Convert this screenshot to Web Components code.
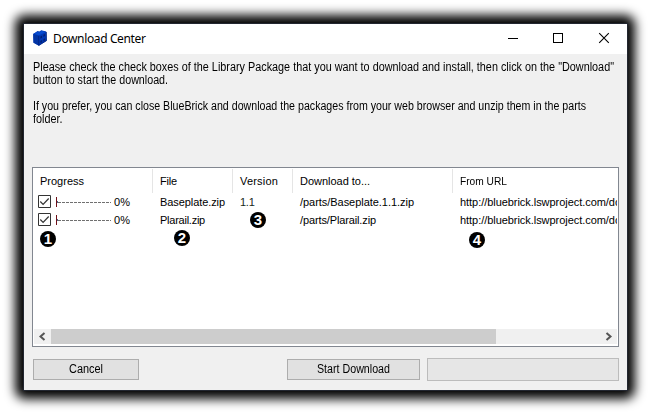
<!DOCTYPE html>
<html lang="en"><head><meta charset="utf-8"><title>Download Center</title>
<style>
html,body{margin:0;width:651px;height:414px;overflow:hidden;background:#fff}
body{font:11px/13px "Liberation Sans",Arial,sans-serif;color:#000}
</style></head><body>
<download-window></download-window>
<script>
const define=(name,html,setup)=>customElements.define(name,class extends HTMLElement{
  connectedCallback(){
    if(this.shadowRoot)return;
    const t=document.createElement('template');t.innerHTML=html;
    this.attachShadow({mode:'open'}).append(t.content.cloneNode(true));
    if(setup)setup(this,this.shadowRoot);
  }
});
// A single line of text set to the width given in "w": tracked, or condensed when "narrow" is present.
define('fit-text',`<style>:host{display:block;white-space:pre;line-height:inherit}span{display:inline-block;transform-origin:0 50%}</style><span><slot></slot></span>`,(el,r)=>{
  const s=r.querySelector('span'),w=+el.getAttribute('w');
  if(!w)return;
  const n=s.getBoundingClientRect().width;
  if(el.hasAttribute('narrow')){s.style.transform='scaleX('+(w/n).toFixed(5)+')';el.style.width=w+'px'}
  else s.style.letterSpacing=((w-n)/el.textContent.length).toFixed(4)+'px';
});
define('brick-icon',`<style>:host{display:block;width:14px;height:16px;margin-top:-2px;flex:none}svg{display:block}</style>
<svg width="14" height="16" viewBox="0 0 14 16"><path d="M.2 3.8 3 2.2 4.5 1l2 .4L8.2.3l5 1.2.5 9.3L5.8 15.8.4 12.8Z" fill="#0238b4"/><path d="M.3 4 5.8 5.8v9.8L.6 12.6Z" fill="#0335a4"/><path d="m.8 3.8 3-2 2.4.5L8.6.8l4.2 1.1-7 3.6Z" fill="#074bd0"/><path d="M5.8 5.8v9.6l7.6-4.7V2" fill="none" stroke="#01227a" stroke-width=".8"/><path d="m7.4 6.5 1.7-.9v2.2l-1.7.9Zm3-1.7 1.6-.9v2.2l-1.6.9Zm-3 6.1 1.7-.9v2.2l-1.7.9Zm3-1.7 1.6-.9v2.2l-1.6.9Z" fill="#012174"/></svg>`);
define('title-bar',`<style>:host{display:flex;height:30px;background:#fff;box-sizing:border-box;padding-left:9px;align-items:center}
.t{font:12px/16px "Noto Sans","Open Sans",sans-serif;margin-left:6px;flex:1}svg{display:block;width:46px;height:30px}svg:last-child{width:45px}</style>
<brick-icon></brick-icon><div class="t"><fit-text w="92.5">Download Center</fit-text></div>
<svg viewBox="0 0 46 30" shape-rendering="crispEdges"><path d="M18 14.5h10" stroke="#000"/></svg>
<svg viewBox="0 0 46 30" shape-rendering="crispEdges"><path d="M17.5 9.5h9v9h-9z" fill="none" stroke="#000"/></svg>
<svg viewBox="0 0 45 30"><path d="m17.2 9.2 9.6 9.6m0-9.6-9.6 9.6" stroke="#000" stroke-width="1.1"/></svg>`);
define('intro-text',`<style>:host{display:block;padding:7px 0 0 9px;height:113px;box-sizing:border-box;font-size:12px;line-height:13px}i{display:block;height:13px}</style>
<fit-text narrow w="581">Please check the check boxes of the Library Package that you want to download and install, then click on the "Download"</fit-text>
<fit-text narrow w="135">button to start the download.</fit-text><i></i>
<fit-text narrow w="553">If you prefer, you can close BlueBrick and download the packages from your web browser and unzip them in the parts</fit-text>
<fit-text narrow w="29.5">folder.</fit-text>`);
define('list-header',`<style>:host{display:grid;grid-template-columns:120px 80px 60px 160px 1fr;height:24px;padding-top:1px}
div{padding:6px 0 0 7px;border-right:1px solid #e5e5e5}div:last-child{border:0}</style>
<div><fit-text w="44">Progress</fit-text></div><div><fit-text w="17">File</fit-text></div><div><fit-text w="38">Version</fit-text></div><div><fit-text w="70">Download to...</fit-text></div><div><fit-text narrow w="47">From URL</fit-text></div>`);
define('check-box',`<style>:host{display:block;width:13px;height:13px;flex:none}svg{display:block}</style><svg width="13" height="13"><path d="M.5.5h12v12H.5z" fill="#fff" stroke="#333"/><path d="m2.3 6.5 2.8 2.8 5.6-5.8" fill="none" stroke="#333" stroke-width="1.2"/></svg>`);
define('progress-line',`<style>:host{display:block;width:56px;height:10px;margin-left:5px;flex:none}svg{display:block}</style><svg width="56" height="10" shape-rendering="crispEdges"><path d="M.5 0v10" stroke="#701018"/><path d="M1.5 4v2" stroke="#568"/><path d="M2 5.5h53" stroke="#707070" stroke-dasharray="3 1"/></svg>`);
define('download-row',`<style>:host{display:grid;grid-template-columns:120px 80px 60px 160px 1fr;height:18px;align-items:center;width:584px;overflow:hidden}
.p{display:flex;align-items:center;padding-left:5px}check-box{margin-top:-1px}.p fit-text{margin-left:2px}.c{padding-left:7px}</style>
<div class="p"><check-box></check-box><progress-line></progress-line><fit-text w="16">0%</fit-text></div>
<div class="c"><slot name="file"></slot></div><div class="c"><slot name="version"></slot></div><div class="c"><slot name="path"></slot></div><div class="c"><slot name="url"></slot></div>`);
define('number-badge',`<style>:host{position:absolute;width:16px;height:16px;border-radius:50%;background:#000;color:#fff;font:bold 15px/16px "Liberation Sans",Arial,sans-serif;text-align:center}</style><slot></slot>`);
define('scroll-bar',`<style>:host{display:flex;height:15px;width:583px;margin-left:1px;background:#f0f0f0;align-items:center;justify-content:space-between}
.b{width:445px;height:15px;background:#cdcdcd;margin-right:104px}svg{display:block;width:17px;height:15px}</style>
<svg><path d="m10.5 4-4 3.5 4 3.5" fill="none" stroke="#555" stroke-width="2"/></svg><div class="b"></div><svg><path d="m6.5 4 4 3.5-4 3.5" fill="none" stroke="#555" stroke-width="2"/></svg>`);
define('package-list',`<style>:host{display:flex;flex-direction:column;position:relative;margin:0 8px;height:180px;box-sizing:border-box;border:1px solid #828790;background:#fff;overflow:hidden}
list-header{flex:none}.g{flex:1}scroll-bar{margin-bottom:2px}</style>
<list-header></list-header>
<download-row><fit-text slot="file" w="65">Baseplate.zip</fit-text><fit-text slot="version" w="14.5" style="color:#182818">1.1</fit-text><fit-text slot="path" w="114">/parts/Baseplate.1.1.zip</fit-text><fit-text slot="url" w="161">http://bluebrick.lswproject.com/do</fit-text></download-row>
<download-row><fit-text slot="file" w="45">Plarail.zip</fit-text><fit-text slot="path" w="76">/parts/Plarail.zip</fit-text><fit-text slot="url" w="161">http://bluebrick.lswproject.com/do</fit-text></download-row>
<div class="g"></div><scroll-bar></scroll-bar>
<number-badge style="left:7px;top:63px">1</number-badge><number-badge style="left:141px;top:62px">2</number-badge><number-badge style="left:217px;top:44px">3</number-badge><number-badge style="left:436px;top:64px">4</number-badge>`);
define('push-button',`<style>:host{display:flex;height:21px;box-sizing:border-box;border:1px solid #adadad;background:#e1e1e1;align-items:center;justify-content:center;font-size:12px;line-height:15px}</style><slot></slot>`);
define('progress-box',`<style>:host{display:block;width:192px;height:23px;box-sizing:border-box;border:1px solid #bcbcbc;background:#e6e6e6}</style>`);
define('download-window',`<style>:host{display:block;padding:24px;box-sizing:border-box;width:651px;height:414px;background:#fff}
.w{position:relative;width:603px;height:366px;z-index:0}
.w::before{content:"";position:absolute;z-index:-2;inset:-9px -8px -9px -9px;background:#000;border-radius:9px;filter:blur(5.5px)}
.in{position:absolute;inset:0;background:#f0f0f0;box-shadow:0 0 0 1px #222630}
.f{display:flex;align-items:center;padding:11px 8px 0 9px;height:23px}
.f push-button:first-child{width:106px;margin-right:148px}.f push-button:nth-child(2){width:133px;margin-right:7px}</style>
<div class="w"><div class="in"><title-bar></title-bar><intro-text></intro-text><package-list></package-list>
<div class="f"><push-button><fit-text narrow w="34">Cancel</fit-text></push-button><push-button><fit-text narrow w="73">Start Download</fit-text></push-button><progress-box></progress-box></div></div></div>`);
</script></body></html>
